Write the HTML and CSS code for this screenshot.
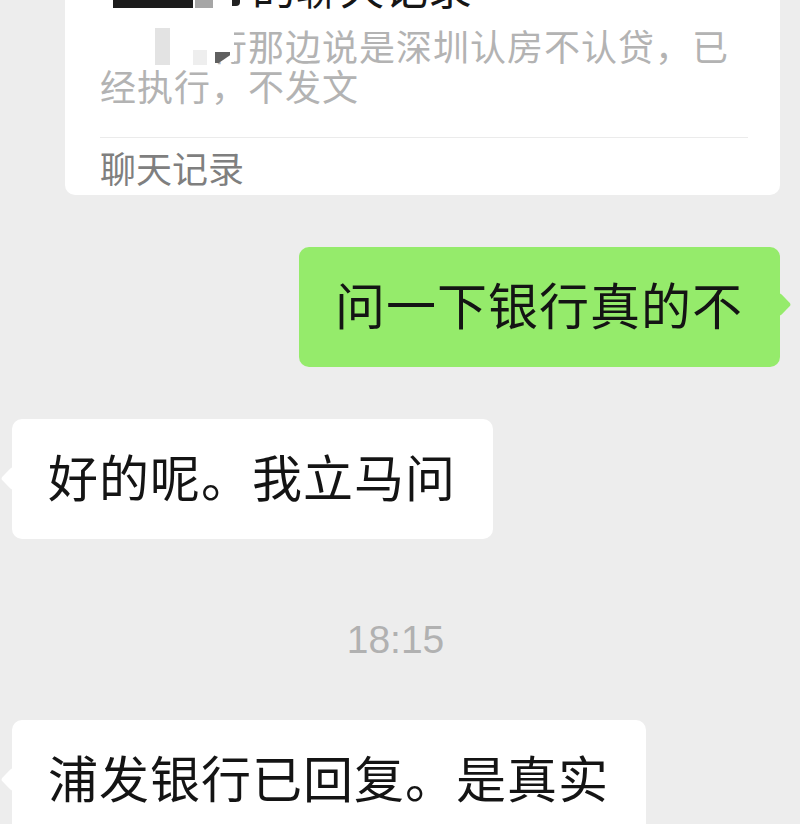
FILE: index.html
```html
<!DOCTYPE html>
<html lang="zh-CN">
<head>
<meta charset="utf-8">
<title>聊天</title>
<link rel="stylesheet" href="styles.css">
</head>
<body>
<div class="chat">
  <div class="card">
    <div class="card-title"><span class="spacer"></span>的聊天记录</div>
    <div class="card-summary">
      <div class="sum-line"><span class="hidden">某某银</span>行那边说是深圳认房不认贷，已</div>
      <div class="sum-line">经执行，不发文</div>
    </div>
    <div class="card-divider"></div>
    <div class="card-label">聊天记录</div>
    <span class="mask mask-black"></span>
    <span class="mask mask-grey"></span>
    <span class="mask mask-stroke"></span>
    <span class="mask mask-white"></span>
    <span class="mask mask-block1"></span>
    <span class="mask mask-block2"></span>
    <span class="mask mask-arrow"></span>
  </div>

  <div class="row row-right">
    <div class="bubble bubble-green">问一下银行真的不</div>
  </div>

  <div class="row row-left">
    <div class="bubble bubble-white">好的呢。我立马问</div>
  </div>

  <div class="time">18:15</div>

  <div class="row row-left row-last">
    <div class="bubble bubble-white">浦发银行已回复。是真实</div>
  </div>
</div>
</body>
</html>
```

FILE: styles.css
```css
html, body {
  margin: 0;
  padding: 0;
}
body {
  background: #ededed;
  height: 824px;
  overflow: hidden;
  font-family: "Noto Sans CJK SC", "Noto Sans", sans-serif;
  color: #141414;
}
.chat {
  display: flex;
  flex-direction: column;
}

/* forwarded chat record card */
.card {
  position: relative;
  margin: -52px 20px 0 65px;
  padding: 16px 32px 8px 35px;
  background: #ffffff;
  border-radius: 10px;
}
.card-title {
  font-size: 44px;
  line-height: 44px;
  color: #161616;
  white-space: nowrap;
}
.spacer {
  display: inline-block;
  width: 152px;
}
.card-summary {
  margin-top: 17px;
  font-size: 36px;
  line-height: 40px;
  color: #b3b3b3;
  letter-spacing: 1px;
  white-space: nowrap;
}
.hidden {
  color: transparent;
}
.card-divider {
  margin-top: 32px;
  height: 1px;
  background: #ebebeb;
}
.card-label {
  margin-top: 9px;
  font-size: 36px;
  line-height: 40px;
  color: #7f7f7f;
}
.mask {
  position: absolute;
  display: block;
}
.mask-black {
  left: 48px;
  top: 36px;
  width: 80px;
  height: 24px;
  background: #1c1c1c;
}
.mask-grey {
  left: 130px;
  top: 36px;
  width: 18px;
  height: 24px;
  background: #a6a6a6;
}
.mask-stroke {
  left: 167px;
  top: 40px;
  width: 8px;
  height: 18px;
  background: #222;
  border-radius: 0 0 4px 0;
}
.mask-white {
  left: 145px;
  top: 74px;
  width: 24px;
  height: 40px;
  background: #ffffff;
}
.mask-block1 {
  left: 90px;
  top: 80px;
  width: 15px;
  height: 37px;
  background: #e3e3e3;
}
.mask-block2 {
  left: 128px;
  top: 102px;
  width: 14px;
  height: 15px;
  background: #eeeeee;
}
.mask-arrow {
  left: 150px;
  top: 104px;
  width: 15px;
  height: 11px;
  background: #606060;
  clip-path: polygon(0 0, 100% 0, 100% 30%, 25% 100%, 0 100%);
}

/* message rows */
.row {
  display: flex;
  margin-top: 52px;
}
.row-right {
  justify-content: flex-end;
  padding-right: 20px;
}
.row-left {
  justify-content: flex-start;
  padding-left: 12px;
}
.row-last {
  margin-top: 55px;
}
.bubble {
  position: relative;
  padding: 21px 37px 29px 36px;
  font-size: 50px;
  line-height: 70px;
  letter-spacing: 1px;
  border-radius: 10px;
  white-space: nowrap;
}
.bubble::after {
  content: "";
  position: absolute;
  top: 49px;
  width: 17px;
  height: 17px;
  border-radius: 3px;
  transform: rotate(45deg);
}
.bubble-green {
  background: #95eb6b;
}
.bubble-green::after {
  right: -8px;
  background: #95eb6b;
}
.bubble-white {
  background: #ffffff;
}
.bubble-white::after {
  left: -8px;
  top: 51px;
  background: #ffffff;
}

.time {
  margin-top: 76px;
  text-align: center;
  font-family: "Liberation Sans", Arial, sans-serif;
  font-size: 39px;
  line-height: 50px;
  color: #b1b1b1;
  padding-right: 9px;
}
```
